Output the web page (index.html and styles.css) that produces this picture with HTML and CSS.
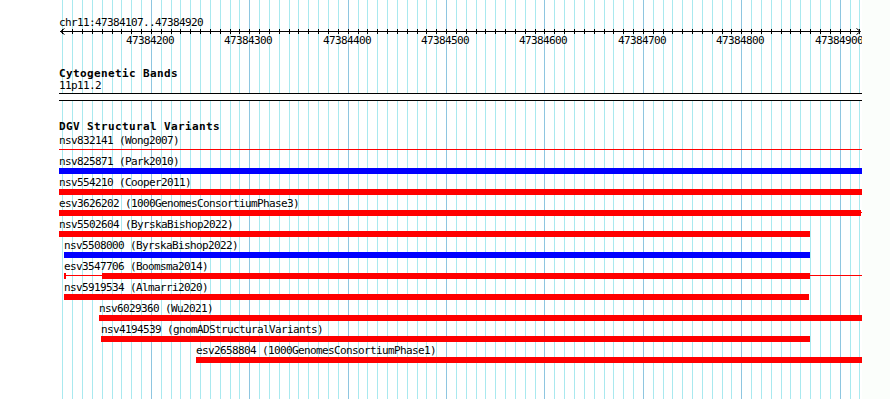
FILE: index.html
```html
<!DOCTYPE html>
<html lang="en">
<head>
  <meta charset="UTF-8">
  <title>DGV Structural Variants - chr11:47384107..47384920</title>
  <link rel="stylesheet" href="styles.css">
</head>
<body>
  <div class="page">
    <div class="browser">
      <!-- grid lines every 10 bp, filled in by app.js -->
      <div class="grid"></div>

      <div class="tracks">
        <!-- Ruler -->
        <div class="ruler">
          <div class="ruler-label">chr11:47384107..47384920</div>
          <div class="axis"></div>
          <svg class="arrow arrow-left" width="5" height="7" viewBox="0 0 5 7"><polyline points="4.5,0.5 0.5,3.5 4.5,6.5" fill="none" stroke="#000" stroke-width="1"/></svg>
          <svg class="arrow arrow-right" width="5" height="7" viewBox="0 0 5 7"><polyline points="0.5,0.5 4.5,3.5 0.5,6.5" fill="none" stroke="#000" stroke-width="1"/></svg>
          <div class="ruler-ticks"></div>
        </div>

        <!-- Cytogenetic Bands -->
        <div class="track cyto">
          <div class="track-title">Cytogenetic Bands</div>
          <div class="track-sub">11p11.2</div>
          <div class="cytoband"></div>
        </div>

        <!-- DGV Structural Variants -->
        <div class="track dgv">
          <div class="track-title">DGV Structural Variants</div>

          <div class="feature">
            <div class="feature-label">nsv832141 (Wong2007)</div>
            <div class="glyph"><span class="thin red" style="left:0;width:803px"></span></div>
          </div>
          <div class="feature">
            <div class="feature-label">nsv825871 (Park2010)</div>
            <div class="glyph"><span class="bar blue" style="left:0;width:803px"></span></div>
          </div>
          <div class="feature">
            <div class="feature-label">nsv554210 (Cooper2011)</div>
            <div class="glyph"><span class="bar red" style="left:0;width:803px"></span></div>
          </div>
          <div class="feature">
            <div class="feature-label">esv3626202 (1000GenomesConsortiumPhase3)</div>
            <div class="glyph">
              <span class="thin red" style="left:0;width:803px"></span>
              <span class="bar red" style="left:0;width:802px"></span>
            </div>
          </div>
          <div class="feature">
            <div class="feature-label">nsv5502604 (ByrskaBishop2022)</div>
            <div class="glyph"><span class="bar red" style="left:0;width:751px"></span></div>
          </div>
          <div class="feature">
            <div class="feature-label" style="margin-left:5px">nsv5508000 (ByrskaBishop2022)</div>
            <div class="glyph"><span class="bar blue" style="left:5px;width:746px"></span></div>
          </div>
          <div class="feature">
            <div class="feature-label" style="margin-left:5px">esv3547706 (Boomsma2014)</div>
            <div class="glyph">
              <span class="thin red" style="left:5px;width:798px"></span>
              <span class="bar red" style="left:5px;width:2px"></span>
              <span class="bar red" style="left:43px;width:708px"></span>
            </div>
          </div>
          <div class="feature">
            <div class="feature-label" style="margin-left:5px">nsv5919534 (Almarri2020)</div>
            <div class="glyph"><span class="bar red" style="left:5px;width:745px"></span></div>
          </div>
          <div class="feature">
            <div class="feature-label" style="margin-left:40px">nsv6029360 (Wu2021)</div>
            <div class="glyph"><span class="bar red" style="left:40px;width:763px"></span></div>
          </div>
          <div class="feature">
            <div class="feature-label" style="margin-left:42px">nsv4194539 (gnomADStructuralVariants)</div>
            <div class="glyph"><span class="bar red" style="left:42px;width:709px"></span></div>
          </div>
          <div class="feature">
            <div class="feature-label" style="margin-left:137px">esv2658804 (1000GenomesConsortiumPhase1)</div>
            <div class="glyph"><span class="bar red" style="left:137px;width:666px"></span></div>
          </div>
        </div>
      </div>
    </div>
  </div>
  <script src="app.js"></script>
</body>
</html>
```

FILE: styles.css
```css
html, body {
  margin: 0;
  padding: 0;
  height: 100%;
  overflow: hidden;
}

body {
  background: #fbfefb;
  color: #000;
  font-family: "DejaVu Sans Mono", "Liberation Mono", monospace;
  font-size: 11px;
  letter-spacing: -0.62px; /* 6px per character, like the small gd font */
}

.page {
  width: 862px;
  height: 399px;
  background: #fff;
}

.browser {
  position: relative;
  margin-left: 59px;
  width: 803px;
  height: 399px;
  overflow: hidden;
}

/* Grid */
.grid {
  position: absolute;
  top: 0;
  left: 0;
  right: 0;
  bottom: 0;
}

.gridline {
  position: absolute;
  top: 0;
  bottom: 0;
  width: 1px;
  background: #a9e9ef;
}

.gridline.major {
  background: #8ec6e0;
}

.tracks {
  position: relative;
}

/* Ruler */
.ruler {
  position: relative;
  height: 68px;
}

.ruler-label {
  position: absolute;
  left: 0;
  top: 16px;
  line-height: 13px;
  white-space: nowrap;
}

.axis {
  position: absolute;
  left: 1px;
  top: 31px;
  width: 800px;
  height: 1px;
  background: #000;
}

.arrow {
  position: absolute;
  top: 28px;
  display: block;
}

.arrow-left {
  left: 1px;
}

.arrow-right {
  left: 797px;
}

.tick {
  position: absolute;
  top: 29px;
  width: 1px;
  height: 5px;
  background: #000;
}

.tick-label {
  position: absolute;
  top: 35px;
  line-height: 12px;
  white-space: nowrap;
}

/* Tracks */
.track-title {
  font-weight: bold;
  letter-spacing: 0.38px; /* 7px per character */
  line-height: 12px;
  white-space: nowrap;
}

.track-sub {
  line-height: 12px;
}

.cytoband {
  margin-top: 1px;
  height: 6px;
  background: #fff;
  border-top: 1px solid #000;
  border-bottom: 1px solid #000;
}

.dgv {
  margin-top: 20px;
}

.dgv .track-title {
  margin-bottom: 2px;
}

.feature {
  height: 21px;
}

.feature-label {
  height: 12px;
  line-height: 12px;
  white-space: nowrap;
}

.glyph {
  position: relative;
  height: 6px;
}

.bar {
  position: absolute;
  top: 0;
  height: 6px;
}

.thin {
  position: absolute;
  top: 2px;
  height: 1px;
}

.red {
  background: #ff0000;
}

.blue {
  background: #0000ff;
}
```

FILE: app.js
```js
// grid lines and ruler ticks, one every 10 bp from 47384110 to 47384920
var start = 47384000;
var scale = 0.984; // px per bp

function toX(bp) {
  return Math.round(3.3 + (bp - 110) * scale);
}

var grid = document.querySelector('.grid');
var ticks = document.querySelector('.ruler-ticks');

for (var bp = 110; bp <= 920; bp += 10) {
  var x = toX(bp);
  var major = bp % 100 === 0;

  var line = document.createElement('div');
  line.className = major ? 'gridline major' : 'gridline';
  line.style.left = x + 'px';
  grid.appendChild(line);

  var tick = document.createElement('div');
  tick.className = 'tick';
  tick.style.left = x + 'px';
  ticks.appendChild(tick);

  if (major) {
    var label = document.createElement('div');
    label.className = 'tick-label';
    label.textContent = String(start + bp);
    label.style.left = (x - 25) + 'px';
    ticks.appendChild(label);
  }
}
```
